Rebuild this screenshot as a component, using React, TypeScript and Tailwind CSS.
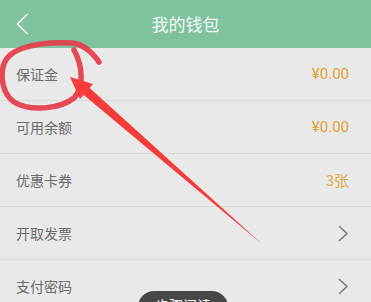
import React from "react";

const font = { fontFamily: '"Noto Sans CJK SC", Roboto, "Noto Sans", sans-serif' };

function Chevron() {
  return (
    <svg width="11" height="17" viewBox="0 0 11 17" fill="none">
      <path d="M1.5 1.5 L9 8.5 L1.5 15.5" stroke="#7a7a7a" strokeWidth="1.6" strokeLinecap="round" strokeLinejoin="round" />
    </svg>
  );
}

function Row({ label, right }: { label: string; right: React.ReactNode }) {
  return (
    <div className="h-[53px] border-b border-[#d9d9d9] flex items-center justify-between pl-4 pr-[22px]">
      <span className="text-[14px] text-[#6b6b6b]">{label}</span>
      {right}
    </div>
  );
}

export default function App() {
  return (
    <div className="relative w-[371px] h-[302px] overflow-hidden bg-[#e9e9e9]" style={font}>
      <div className="h-[48px] bg-[#7ec29e] flex items-center relative">
        <div className="pl-[15px] flex items-center">
          <svg width="14" height="22" viewBox="0 0 14 22" fill="none">
            <path d="M12 1.5 L2.5 11 L12 20.5" stroke="#ffffff" strokeOpacity="0.9" strokeWidth="1.6" strokeLinecap="round" strokeLinejoin="round" />
          </svg>
        </div>
        <div className="absolute inset-0 flex items-center justify-center text-[17px] text-white/90">我的钱包</div>
      </div>
      <Row label="保证金" right={<span className="text-[15px] text-[#dca233]" style={{ fontFamily: 'Roboto, "Noto Sans CJK SC", sans-serif' }}>¥0.00</span>} />
      <Row label="可用余额" right={<span className="text-[15px] text-[#dca233]" style={{ fontFamily: 'Roboto, "Noto Sans CJK SC", sans-serif' }}>¥0.00</span>} />
      <Row label="优惠卡券" right={<span className="text-[15px] text-[#d8aa52]">3张</span>} />
      <Row label="开取发票" right={<Chevron />} />
      <Row label="支付密码" right={<Chevron />} />

      <svg className="absolute left-0 top-0 pointer-events-none" width="371" height="302" viewBox="0 0 371 302">
        <path
          d="M99 62 C92 52 82 44 72 43 C55 42 25 43 10 55 C-2 66 0 92 14 102 C30 112 60 109 74 98 C84 88 83 66 74 50"
          stroke="#e4404d"
          strokeWidth="5.5"
          fill="none"
          strokeLinecap="round"
          strokeLinejoin="round"
          opacity="0.95"
        />
        <polygon points="262,244 88,86.5 82,93.5" fill="#f43c3c" />
        <polygon points="70,77 93,84 80,99" fill="#f43c3c" />
      </svg>

      <div className="absolute left-[138px] top-[291px] w-[90px] h-[34px] rounded-[16px] bg-[#474747] flex items-start justify-center pt-[7px]">
        <span className="text-[14px] text-white leading-none">步骤阅读</span>
      </div>
    </div>
  );
}
